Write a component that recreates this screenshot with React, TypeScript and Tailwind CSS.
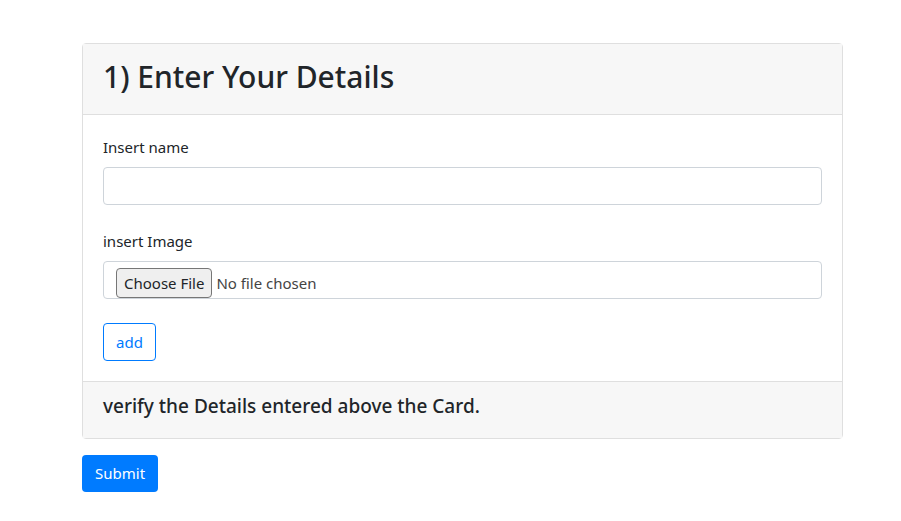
export default function App() {
  return (
    <div className="min-h-[521px] bg-white px-[82px] pt-[43px] text-[#212529] font-['Noto_Sans',sans-serif]">
      <div className="flex w-[761px] flex-col rounded border border-[#dfdfdf]">
        {/* card header */}
        <div className="border-b border-[#dfdfdf] bg-[#f7f7f7] px-5 pt-[14px] pb-[10px]">
          <h2 className="mb-2 text-[30px] leading-[38px] font-medium">1) Enter Your Details</h2>
        </div>

        {/* card body */}
        <div className="flex flex-col p-5">
          <label className="mb-2 text-[15px] leading-6">Insert name</label>
          <div className="h-[38px] rounded border border-[#ced4da]" />

          <label className="mt-6 mb-2 text-[15px] leading-6">insert Image</label>
          <div className="flex h-[38px] items-end rounded border border-[#ced4da] pl-3">
            <span className="flex h-[30px] items-center rounded-sm border border-[#767676] bg-[#efefef] px-[7px] text-[15px]">
              Choose File
            </span>
            <span className="ml-1 self-center pt-[6px] text-[15px] text-[#444]">No file chosen</span>
          </div>

          <div className="mt-6">
            <button className="h-[38px] rounded border border-[#007bff] px-3 text-[15px] text-[#007bff]">add</button>
          </div>
        </div>

        {/* card footer */}
        <div className="border-t border-[#dfdfdf] bg-[#f7f7f7] px-5 pt-3 pb-3">
          <h5 className="mb-2 text-[19px] leading-6 font-medium">verify the Details entered above the Card.</h5>
        </div>
      </div>

      <button className="mt-4 h-[37px] rounded bg-[#007bff] px-[13px] text-[15px] text-white">Submit</button>
    </div>
  );
}
